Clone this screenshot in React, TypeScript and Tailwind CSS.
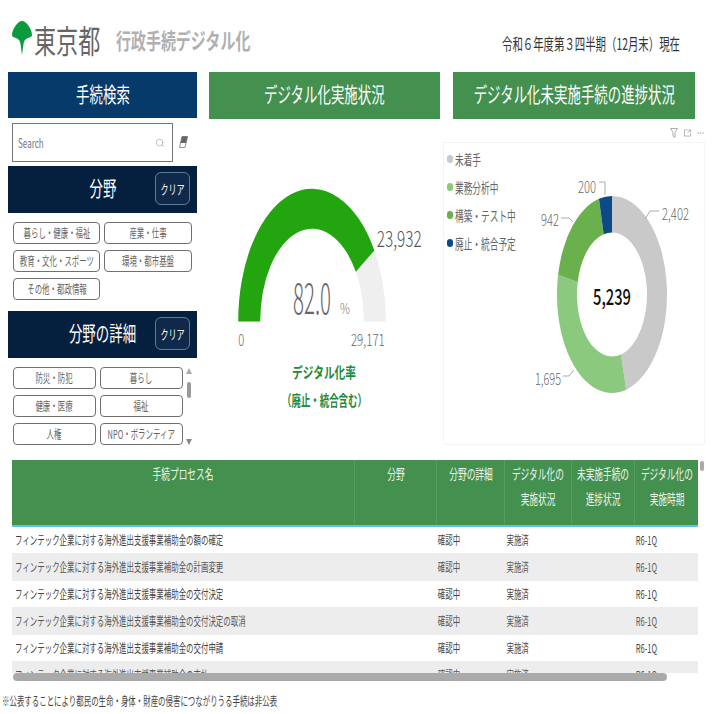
import { Search } from 'lucide-react';

const squeeze = 'inline-block whitespace-nowrap scale-x-[0.62]';
const squeezeLeft = 'inline-block whitespace-nowrap scale-x-[0.62] origin-left';

const row1 = ['暮らし・健康・福祉', '産業・仕事', '教育・文化・スポーツ', '環境・都市基盤', 'その他・都政情報'];
const row2 = ['防災・防犯', '暮らし', '健康・医療', '福祉', '人権', 'NPO・ボランティア'];

const procedures = [
  'フィンテック企業に対する海外進出支援事業補助金の額の確定',
  'フィンテック企業に対する海外進出支援事業補助金の計画変更',
  'フィンテック企業に対する海外進出支援事業補助金の交付決定',
  'フィンテック企業に対する海外進出支援事業補助金の交付決定の取消',
  'フィンテック企業に対する海外進出支援事業補助金の交付申請',
  'フィンテック企業に対する海外進出支援事業補助金の支払',
];

// point on an ellipse, angle in degrees clockwise from the top
function pt(cx: number, cy: number, rx: number, ry: number, deg: number) {
  const a = (deg * Math.PI) / 180;
  return `${(cx + rx * Math.sin(a)).toFixed(2)} ${(cy - ry * Math.cos(a)).toFixed(2)}`;
}

function ring(cx: number, cy: number, rx: number, ry: number, ix: number, iy: number, from: number, to: number) {
  const large = to - from > 180 ? 1 : 0;
  return `M${pt(cx, cy, rx, ry, from)} A${rx} ${ry} 0 ${large} 1 ${pt(cx, cy, rx, ry, to)} L${pt(cx, cy, ix, iy, to)} A${ix} ${iy} 0 ${large} 0 ${pt(cx, cy, ix, iy, from)} Z`;
}

function Label({ x, y, w, size, fill, weight = 300, children }: { x: number; y: number; w: number; size: number; fill: string; weight?: number; children: string }) {
  return (
    <text x={x} y={y} fontSize={size} fill={fill} fontWeight={weight} textLength={w} lengthAdjust="spacingAndGlyphs">
      {children}
    </text>
  );
}

function BlockHeader({ title, color, clear }: { title: string; color: string; clear?: boolean }) {
  return (
    <div className={`relative flex h-[47px] items-center justify-center pb-[3px] ${color}`}>
      <span className="inline-block scale-x-[0.64] whitespace-nowrap text-[21px] text-white">{title}</span>
      {clear && (
        <div className="absolute right-[7px] top-[6px] flex h-[33px] w-[35px] items-center justify-center rounded-[6px] border border-[#5b7c99] bg-[#10294a]">
          <span className={`${squeeze} text-[13px] text-white`}>クリア</span>
        </div>
      )}
    </div>
  );
}

function Chip({ text }: { text: string }) {
  return (
    <div className="flex h-[22px] items-center justify-center overflow-hidden rounded-[4px] border border-[#707070] bg-white">
      <span className={`${squeeze} text-[12px] text-[#666]`}>{text}</span>
    </div>
  );
}

function Gauge() {
  return (
    <svg viewBox="209 118 231 327" className="h-[327px] w-[231px]">
      <path d={ring(312, 321, 74, 133, 52, 93, -90, 90)} fill="#efefef" />
      <path d={ring(312, 321, 74, 133, 52, 93, -90, 57.6)} fill="#22a50e" />
      <Label x={293} y={314} w={38} size={42} fill="#666">82.0</Label>
      <Label x={340} y={314} w={10} size={14} fill="#777">%</Label>
      <Label x={238} y={346} w={6} size={16} fill="#666">0</Label>
      <Label x={351} y={346} w={34} size={16} fill="#666">29,171</Label>
      <Label x={377} y={246} w={45} size={22} fill="#555">23,932</Label>
      <Label x={292} y={378} w={64} size={15} fill="#1f8a3c" weight={700}>デジタル化率</Label>
      <Label x={282} y={406} w={85} size={15} fill="#1f8a3c" weight={700}>（廃止・統合含む）</Label>
    </svg>
  );
}

function Donut() {
  const parts = [
    { v: 2402, c: '#c9c9c9' },
    { v: 1695, c: '#8bc97e' },
    { v: 942, c: '#6ab04c' },
    { v: 200, c: '#0b4a86' },
  ];
  const total = 5239;
  let at = 0;
  return (
    <svg viewBox="530 142 174 302" className="h-[302px] w-[174px]">
      {parts.map((p) => {
        const from = at;
        at += (p.v / total) * 360;
        return <path key={p.c} d={ring(612, 293.5, 55, 98.5, 35, 62, from, at)} fill={p.c} />;
      })}
      <g fill="none" stroke="#aaa" strokeWidth="1">
        <path d="M599 181h6v13" />
        <path d="M650 210h9M650 210l-5 8" />
        <path d="M561 217h8l4 4" />
        <path d="M563 375h6l5-6" />
      </g>
      <Label x={578} y={192} w={18} size={16} fill="#666">200</Label>
      <Label x={662} y={219} w={27} size={16} fill="#666">2,402</Label>
      <Label x={541} y={225} w={18} size={16} fill="#666">942</Label>
      <Label x={535} y={384} w={26} size={16} fill="#666">1,695</Label>
      <Label x={593} y={304} w={38} size={22} fill="#111" weight={500}>5,239</Label>
    </svg>
  );
}

export default function App() {
  return (
    <div className="relative flex h-[714px] w-[714px] flex-col overflow-hidden bg-white font-['Noto_Sans_CJK_JP',sans-serif]">
      {/* title bar */}
      <div className="flex h-[72px] items-start pl-[12px] pt-[21px]">
        <svg viewBox="0 0 20 34" className="h-[34px] w-[20px] shrink-0">
          <path d="M10 0C14 0 20 8 20 14C20 16 18 16.5 16 17C13 18 12 20 11.5 23L10 34L8.5 23C8 20 7 18 4 17C2 16.5 0 16 0 14C0 8 6 0 10 0Z" fill="#0d9a3f" />
        </svg>
        <span className="ml-[2px] mt-[1px] inline-block w-[66px] shrink-0 origin-left scale-x-[0.69] whitespace-nowrap text-[32px] leading-[34px] text-[#666]">東京都</span>
        <span className="ml-[16px] mt-[4px] inline-block w-[134px] shrink-0 origin-left scale-x-[0.68] whitespace-nowrap text-[22px] font-bold leading-[28px] text-[#b0b0b0]">行政手続デジタル化</span>
        <span className="ml-[252px] mt-[11px] inline-block shrink-0 origin-left scale-x-[0.65] whitespace-nowrap text-[16px] leading-[22px] text-[#333]">令和６年度第３四半期（12月末）現在</span>
      </div>

      {/* main panels */}
      <div className="flex h-[373px] pl-[8px]">
        <div className="flex w-[189px] shrink-0 flex-col">
          <BlockHeader title="手続検索" color="bg-[#063a6b]" />
          <div className="mt-[5px] flex items-center">
            <div className="ml-[4px] flex h-[39px] w-[161px] items-center justify-between border border-[#777] px-[5px]">
              <span className={`${squeezeLeft} text-[13px] text-[#777]`}>Search</span>
              <Search size={10} strokeWidth={1.2} className="mr-[2px] text-[#888]" />
            </div>
            <svg viewBox="0 0 9 12" className="mb-[2px] ml-[6px] h-[12px] w-[9px]">
              <path d="M3 0.5H8.5L6 11.5H0.5Z" fill="#fff" stroke="#777" strokeWidth="0.8" />
              <path d="M3 0.5H8.5L7 7H1.5Z" fill="#666" />
            </svg>
          </div>
          <div className="mt-[4px]">
            <BlockHeader title="分野" color="bg-[#05203f]" clear />
          </div>
          <div className="mt-[9px] grid grid-cols-[87px_88px] gap-x-[4px] gap-y-[6px] pl-[5px]">
            {row1.map((t) => (
              <Chip key={t} text={t} />
            ))}
          </div>
          <div className="mt-[11px]">
            <BlockHeader title="分野の詳細" color="bg-[#05203f]" clear />
          </div>
          <div className="relative mt-[9px] grid grid-cols-[83px_83px] gap-x-[4px] gap-y-[6px] pl-[5px]">
            {row2.map((t) => (
              <Chip key={t} text={t} />
            ))}
            <div className="absolute right-[5px] top-0 flex h-[78px] w-[7px] flex-col items-center justify-between">
              <span className="mt-[1px] h-0 w-0 border-x-[3px] border-b-[6px] border-x-transparent border-b-[#aaa]" />
              <span className="absolute top-[15px] h-[16px] w-[4px] rounded-full bg-[#999]" />
              <span className="h-0 w-0 border-x-[3px] border-t-[6px] border-x-transparent border-t-[#888]" />
            </div>
          </div>
        </div>

        <div className="ml-[12px] flex w-[231px] shrink-0 flex-col">
          <BlockHeader title="デジタル化実施状況" color="bg-[#43904f]" />
          <Gauge />
        </div>

        <div className="ml-[3px] flex w-[262px] shrink-0 flex-col">
          <div className="mx-[10px]">
            <BlockHeader title="デジタル化未実施手続の進捗状況" color="bg-[#43904f]" />
          </div>
          <div className="flex h-[24px] items-center justify-end gap-[6px] pr-[1px] pt-[5px] text-[#999]">
            <svg viewBox="0 0 8 10" className="h-[10px] w-[8px]" fill="none" stroke="currentColor" strokeWidth="0.8">
              <path d="M0.5 0.5H7.5L5 4.5V9.5L3 8V4.5Z" />
            </svg>
            <svg viewBox="0 0 8 8" className="h-[8px] w-[7px]" fill="none" stroke="currentColor" strokeWidth="0.8">
              <path d="M4 0.5H0.5V7.5H7.5V4M4 4L7.5 0.5M5 0.5H7.5V3" />
            </svg>
            <svg viewBox="0 0 7 2" className="h-[2px] w-[7px]" fill="currentColor">
              <circle cx="1" cy="1" r="0.7" />
              <circle cx="3.5" cy="1" r="0.7" />
              <circle cx="6" cy="1" r="0.7" />
            </svg>
          </div>
          <div className="flex h-[303px] border border-[#f4f4f4]">
            <div className="flex w-[86px] flex-col gap-[10px] pl-[3px] pt-[7px]">
              {[
                ['未着手', 'bg-[#c9c9c9]'],
                ['業務分析中', 'bg-[#8bc97e]'],
                ['構築・テスト中', 'bg-[#6ab04c]'],
                ['廃止・統合予定', 'bg-[#0b4a86]'],
              ].map(([t, c]) => (
                <div key={t} className="flex h-[18px] items-center">
                  <span className={`h-[8px] w-[6px] shrink-0 rounded-full ${c}`} />
                  <span className={`${squeezeLeft} ml-[2px] text-[14px] text-[#666]`}>{t}</span>
                </div>
              ))}
            </div>
            <Donut />
          </div>
        </div>
      </div>

      {/* table */}
      <div className="relative ml-[12px] mt-[15px] w-[702px]">
        <div className="w-[686px]">
          <div className="grid h-[67px] grid-cols-[342px_82px_68px_67px_63px_64px] border-b-2 border-[#62c0ee] bg-[#43904f] text-[14px] leading-[25px] text-[#eef6ee]">
            {[['手続プロセス名'], ['分野'], ['分野の詳細'], ['デジタル化の', '実施状況'], ['未実施手続の', '進捗状況'], ['デジタル化の', '実施時期']].map((lines, i) => (
              <div key={lines[0]} className={`flex flex-col items-center pt-[1px] ${i > 0 ? 'border-l border-[#559d60]' : ''}`}>
                {lines.map((l) => (
                  <span key={l} className={squeeze}>{l}</span>
                ))}
              </div>
            ))}
          </div>
          <div className="h-[146px] overflow-hidden text-[12px] text-[#444]">
            {procedures.map((p, i) => (
              <div key={p} className={`grid grid-cols-[342px_82px_68px_67px_63px_64px] items-center ${i % 2 === 1 ? 'h-[28px] bg-[#ededed] text-[#555]' : 'h-[26px] bg-white'}`}>
                <span className={`${squeezeLeft} pl-[5px]`}>{p}</span>
                <span />
                <span className={`${squeezeLeft} pl-[3px]`}>確認中</span>
                <span className={`${squeezeLeft} pl-[4px]`}>実施済</span>
                <span />
                <span className={`${squeezeLeft} pl-[3px]`}>R6-1Q</span>
              </div>
            ))}
          </div>
        </div>
        <div className="ml-[1px] h-[8px] w-[654px] rounded-full bg-[#aaaaaa]" />
        <div className="absolute left-[688px] top-[1px] h-[10px] w-[4px] rounded-full bg-[#aaa]" />
      </div>

      <div className="mt-[12px] pl-[2px] text-[12px] leading-[16px] text-[#444]">
        <span className={squeezeLeft}>※公表することにより都民の生命・身体・財産の侵害につながりうる手続は非公表</span>
      </div>
    </div>
  );
}
